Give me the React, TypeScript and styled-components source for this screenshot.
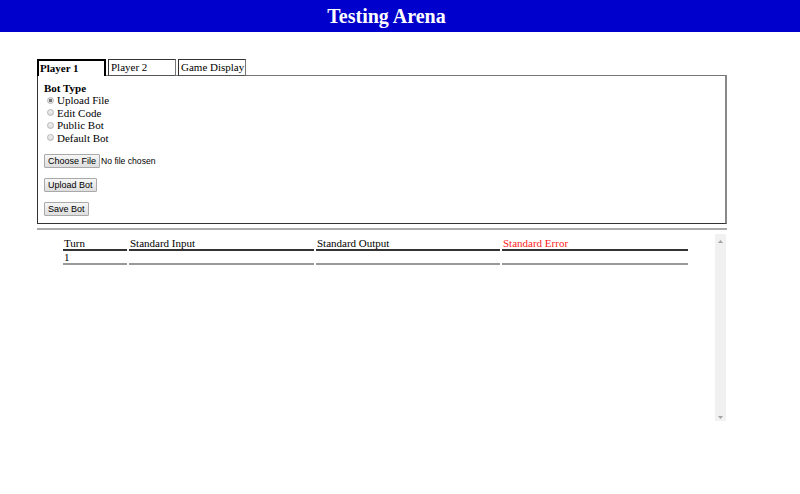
import React from "react";
import styled, { createGlobalStyle } from "styled-components";

const Global = createGlobalStyle`
  html, body { margin: 0; padding: 0; background: #fff; }
  body { font-family: "Liberation Serif", "Times New Roman", serif; color: #000; }
`;

const Header = styled.header`
  height: 32px;
  background: #0000cc;
  color: #fff;
  display: flex;
  align-items: center;
  justify-content: center;
  padding-right: 27px;
  font-family: "Liberation Serif", serif;
  font-weight: bold;
  font-size: 20px;
`;

const Main = styled.main`
  width: 690px;
  margin: 27px 0 0 37px;
`;

const Tabs = styled.div`
  display: flex;
  gap: 2px;
  height: 17px;
  position: relative;
  z-index: 1;
  margin-bottom: -1px;
`;

const Tab = styled.div<{ $active?: boolean }>`
  box-sizing: border-box;
  width: ${(p) => (p.$active ? "69px" : "68px")};
  height: 17px;
  padding: 1px 0 0 ${(p) => (p.$active ? "1px" : "2px")};
  font-size: 11px;
  line-height: 13px;
  white-space: nowrap;
  overflow: hidden;
  font-weight: ${(p) => (p.$active ? "bold" : "normal")};
  background: #fff;
  border-style: solid;
  border-width: ${(p) => (p.$active ? "2px 2px 0 2px" : "1px 1px 0 1px")};
  border-color: ${(p) => (p.$active ? "#000" : "#333 #777 #777 #333")};
  ${(p) => (p.$active ? "" : "border-bottom: 1px solid #555;")}
`;

const Panel = styled.section`
  box-sizing: border-box;
  height: 149px;
  border-top: 1px solid #777;
  border-left: 1px solid #333;
  border-right: 2px solid #888;
  border-bottom: 1px solid #333;
  padding: 6px 6px;
  display: flex;
  flex-direction: column;
`;

const Label = styled.div`
  font-weight: bold;
  font-size: 11px;
  line-height: 12px;
`;

const RadioRow = styled.label`
  display: flex;
  align-items: center;
  font-size: 11px;
  line-height: 12.5px;
  height: 12.5px;
  padding-left: 3px;
`;

const Dot = styled.span<{ $on?: boolean }>`
  box-sizing: border-box;
  width: 7px;
  height: 7px;
  border-radius: 50%;
  border: 1px solid #b5b5b5;
  background: ${(p) =>
    p.$on ? "radial-gradient(circle, #777 0 1.6px, #e6e6e6 2px)" : "linear-gradient(#f0f0f0, #dcdcdc)"};
  margin-right: 3px;
`;

const FileRow = styled.div`
  display: flex;
  align-items: center;
  margin-top: 10px;
  gap: 1px;
  font-family: "Liberation Sans", Arial, sans-serif;
  font-size: 8.6px;
`;

const Button = styled.button`
  box-sizing: border-box;
  height: 14px;
  padding: 0 3px;
  font-family: "Liberation Sans", Arial, sans-serif;
  font-size: 9px;
  line-height: 12px;
  color: #000;
  background: linear-gradient(#f6f6f6, #dedede);
  border: 1px solid #a9a9a9;
  border-radius: 1px;
`;

const ButtonRow = styled.div`
  margin-top: 10px;
  display: flex;
`;

const Rule = styled.div`
  height: 2px;
  background: #aaa;
  margin-top: 4px;
`;

const Scroller = styled.div`
  height: 187px;
  margin-top: 4px;
  display: flex;
`;

const TableArea = styled.div`
  flex: 1;
`;

const Track = styled.div`
  width: 11px;
  margin-right: 1px;
  background: #f1f1f1;
  display: flex;
  flex-direction: column;
  justify-content: space-between;
  align-items: center;
  padding: 6px 0 2px;
`;

const Table = styled.table`
  margin: 3px 0 0 24px;
  width: 629px;
  border-collapse: separate;
  border-spacing: 2px 0;
  font-size: 11px;
  table-layout: fixed;
`;

const Th = styled.th<{ $w: number; $red?: boolean }>`
  box-sizing: border-box;
  width: ${(p) => p.$w}px;
  text-align: left;
  font-weight: normal;
  padding: 0 1px;
  line-height: 12px;
  white-space: nowrap;
  color: ${(p) => (p.$red ? "#ff1a1a" : "#000")};
  border-bottom: 2px solid #333;
`;

const Td = styled.td`
  padding: 1px 1px 0;
  line-height: 11px;
  height: 11px;
  border-bottom: 2px solid #999;
`;

const Arrow = ({ down }: { down?: boolean }) => (
  <svg width="5" height="3" viewBox="0 0 5 3">
    <polygon points={down ? "0,0 5,0 2.5,3" : "2.5,0 5,3 0,3"} fill="#a3a3a3" />
  </svg>
);

export default function App() {
  return (
    <>
      <Global />
      <Header>Testing Arena</Header>
      <Main>
        <Tabs>
          <Tab $active>Player 1</Tab>
          <Tab>Player 2</Tab>
          <Tab>Game Display</Tab>
        </Tabs>
        <Panel>
          <Label>Bot Type</Label>
          <RadioRow><Dot $on />Upload File</RadioRow>
          <RadioRow><Dot />Edit Code</RadioRow>
          <RadioRow><Dot />Public Bot</RadioRow>
          <RadioRow><Dot />Default Bot</RadioRow>
          <FileRow>
            <Button>Choose File</Button>
            <span>No file chosen</span>
          </FileRow>
          <ButtonRow><Button>Upload Bot</Button></ButtonRow>
          <ButtonRow><Button>Save Bot</Button></ButtonRow>
        </Panel>
        <Rule />
        <Scroller>
          <TableArea>
            <Table>
              <thead>
                <tr>
                  <Th $w={64}>Turn</Th>
                  <Th $w={185}>Standard Input</Th>
                  <Th $w={184}>Standard Output</Th>
                  <Th $w={186} $red>Standard Error</Th>
                </tr>
              </thead>
              <tbody>
                <tr>
                  <Td>1</Td>
                  <Td />
                  <Td />
                  <Td />
                </tr>
              </tbody>
            </Table>
          </TableArea>
          <Track>
            <Arrow />
            <Arrow down />
          </Track>
        </Scroller>
      </Main>
    </>
  );
}
